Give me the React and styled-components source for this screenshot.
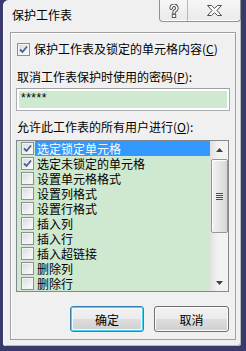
import React from 'react'
import styled, { createGlobalStyle, css } from 'styled-components'

const GlobalStyle = createGlobalStyle`
  html, body {
    margin: 0;
    padding: 0;
    background: #3a396c;
  }
  body {
    font-family: "Noto Sans CJK SC", "Noto Sans", sans-serif;
    font-size: 12px;
    color: #000;
  }
`

const Frame = styled.div`
  box-sizing: border-box;
  width: 246px;
  height: 351px;
  padding: 0 5px 5px 3px;
  background: #3a396c;
`

const Window = styled.div`
  display: flex;
  flex-direction: column;
  height: 346px;
  background: #f0f0f0;
  border-radius: 6px 6px 3px 3px;
  box-shadow: inset 1px 0 0 #fafafa, inset -1px -1px 0 #b9b9b9;
`

const TitleBar = styled.div`
  display: flex;
  justify-content: space-between;
  align-items: flex-start;
  height: 32px;
`

const Title = styled.div`
  padding: 6px 0 0 9px;
  line-height: 18px;
  font-size: 12px;
  color: #000;
`

const CaptionGroup = styled.div`
  display: flex;
  height: 21px;
  border: 1px solid #8e9094;
  border-top: none;
  border-radius: 0 0 4px 4px;
  background: linear-gradient(#f6f6f6, #eaeaea);
  box-shadow: inset 0 -1px 0 #fff;
`

const CaptionButton = styled.div`
  display: flex;
  align-items: center;
  justify-content: center;
  width: ${p => p.w}px;
  & + & {
    border-left: 1px solid #b8b8b8;
  }
`

const Panel = styled.div`
  display: flex;
  flex-direction: column;
  margin: 0 5px 6px 7px;
  height: 308px;
  box-sizing: border-box;
  border: 1px solid #a0a0a0;
  box-shadow: inset 1px 1px 0 #fff;
`

const CheckRow = styled.label`
  display: flex;
  align-items: center;
  height: 16px;
  margin: 8px 0 0 6px;
  gap: 4px;
  line-height: 16px;
`

const Box = styled.span`
  box-sizing: border-box;
  display: inline-flex;
  align-items: center;
  justify-content: center;
  flex: none;
  width: 13px;
  height: 13px;
  border: 1px solid #8e8f8f;
  background: linear-gradient(135deg, #d6d8dc 0%, #eceef0 55%, #fcfcfc 100%);
  box-shadow: inset 0 0 0 1px #f4f4f4;
`

const Label = styled.div`
  margin: ${p => p.top}px 0 0 6px;
  height: 16px;
  line-height: 16px;
`

const Password = styled.div`
  box-sizing: border-box;
  margin: 3px 0 0 5px;
  width: 214px;
  height: 23px;
  border: 1px solid #abadb3;
  border-top-color: #a0a0a0;
  padding: 2px;
  background: #fff;
`

const PasswordFill = styled.div`
  height: 100%;
  background: #cfe8d0;
  padding-left: 2px;
  line-height: 15px;
  font-family: "Liberation Sans", sans-serif;
  font-size: 12px;
  letter-spacing: 0.5px;
`

const List = styled.div`
  box-sizing: border-box;
  display: flex;
  margin: 5px 0 0 5px;
  width: 213px;
  height: 152px;
  border: 1px solid #828790;
  background: #cfe8d0;
`

const Items = styled.div`
  flex: 1;
  display: flex;
  flex-direction: column;
`

const Item = styled.div`
  display: flex;
  align-items: center;
  height: 15px;
  padding-left: 4px;
  gap: 1px;
`

const ItemText = styled.span`
  flex: 1;
  height: 15px;
  line-height: 15px;
  padding-left: 2px;
  overflow: hidden;
  white-space: nowrap;
  ${p =>
    p.selected &&
    css`
      background: #3399ff;
      color: #fff;
    `}
`

const ScrollBar = styled.div`
  display: flex;
  flex-direction: column;
  width: 17px;
  background: linear-gradient(90deg, #e3e3e3, #f2f2f2 40%, #f2f2f2);
  border-left: 1px solid #e0e0e0;
`

const Arrow = styled.div`
  display: flex;
  align-items: center;
  justify-content: center;
  height: 17px;
`

const Thumb = styled.div`
  box-sizing: border-box;
  display: flex;
  align-items: center;
  justify-content: center;
  margin: 1px 0 0 0;
  height: 74px;
  border: 1px solid #959595;
  border-radius: 2px;
  background: linear-gradient(90deg, #f2f2f2, #e6e6e6 50%, #d6d6d6);
  box-shadow: inset 1px 1px 0 #fff;
`

const Grip = styled.div`
  width: 7px;
  height: 7px;
  background: repeating-linear-gradient(
    #4e4e4e 0,
    #4e4e4e 1px,
    #e8e8e8 1px,
    #e8e8e8 2px
  );
`

const Spacer = styled.div`
  flex: 1;
`

const ButtonRow = styled.div`
  display: flex;
  justify-content: flex-end;
  gap: 10px;
  margin: 14px 6px 0 0;
`

const Button = styled.div`
  box-sizing: border-box;
  display: flex;
  align-items: center;
  justify-content: center;
  width: ${p => p.w}px;
  height: 26px;
  border: 1px solid #707070;
  border-radius: 3px;
  background: linear-gradient(#f2f2f2 0%, #ebebeb 50%, #dddddd 51%, #cfcfcf 100%);
  box-shadow: inset 0 0 0 1px #fbfbfb;
  ${p =>
    p.primary &&
    css`
      border-color: #3c7fb1;
      box-shadow: inset 0 0 0 1px #48d0f5, inset 0 0 0 2px #f4fbfe;
    `}
`

const CheckMark = () => (
  <svg width="9" height="9" viewBox="0 0 9 9">
    <path d="M1 4.5 L3.5 7 L8 1.5" fill="none" stroke="#4a5f97" strokeWidth="1.8" />
  </svg>
)

const Check = ({ checked }) => <Box>{checked && <CheckMark />}</Box>

const HelpIcon = () => (
  <svg width="10" height="14" viewBox="0 0 10 14">
    <g fill="none" strokeLinecap="round">
      <path d="M2.2 4.2 A2.8 2.8 0 1 1 6.2 6.6 C5 7.4 5 8 5 9" stroke="#555" strokeWidth="3.6" />
      <path d="M2.2 4.2 A2.8 2.8 0 1 1 6.2 6.6 C5 7.4 5 8 5 9" stroke="#fbfbfb" strokeWidth="1.6" />
    </g>
    <rect x="3.3" y="10.3" width="3.4" height="3.2" fill="#fbfbfb" stroke="#555" strokeWidth="1" />
  </svg>
)

const CloseIcon = () => (
  <svg width="15" height="11" viewBox="0 0 15 11">
    <polygon
      points="0.5,0.5 4.5,0.5 7.5,3.3 10.5,0.5 14.5,0.5 10,5.5 14.5,10.5 10.5,10.5 7.5,7.7 4.5,10.5 0.5,10.5 5,5.5"
      fill="#f8f8f8"
      stroke="#4f4f4f"
      strokeWidth="1"
      strokeLinejoin="round"
    />
  </svg>
)

const UpArrow = () => (
  <svg width="7" height="4" viewBox="0 0 7 4">
    <polygon points="3.5,0 7,4 0,4" fill="#3f3f3f" />
  </svg>
)

const DownArrow = () => (
  <svg width="7" height="4" viewBox="0 0 7 4">
    <polygon points="0,0 7,0 3.5,4" fill="#3f3f3f" />
  </svg>
)

const items = [
  { text: '选定锁定单元格', checked: true, selected: true },
  { text: '选定未锁定的单元格', checked: true },
  { text: '设置单元格格式' },
  { text: '设置列格式' },
  { text: '设置行格式' },
  { text: '插入列' },
  { text: '插入行' },
  { text: '插入超链接' },
  { text: '删除列' },
  { text: '删除行' },
]

const App = () => (
  <Frame>
    <GlobalStyle />
    <Window>
      <TitleBar>
        <Title>保护工作表</Title>
        <CaptionGroup>
          <CaptionButton w={27}>
            <HelpIcon />
          </CaptionButton>
          <CaptionButton w={52}>
            <CloseIcon />
          </CaptionButton>
        </CaptionGroup>
      </TitleBar>

      <Panel>
        <CheckRow>
          <Check checked />
          <span>
            保护工作表及锁定的单元格内容(<u>C</u>)
          </span>
        </CheckRow>

        <Label top={12}>
          取消工作表保护时使用的密码(<u>P</u>):
        </Label>
        <Password>
          <PasswordFill>*****</PasswordFill>
        </Password>

        <Label top={8}>
          允许此工作表的所有用户进行(<u>O</u>):
        </Label>
        <List>
          <Items>
            {items.map(item => (
              <Item key={item.text}>
                <Check checked={item.checked} />
                <ItemText selected={item.selected}>{item.text}</ItemText>
              </Item>
            ))}
          </Items>
          <ScrollBar>
            <Arrow>
              <UpArrow />
            </Arrow>
            <Thumb>
              <Grip />
            </Thumb>
            <Spacer />
            <Arrow>
              <DownArrow />
            </Arrow>
          </ScrollBar>
        </List>

        <ButtonRow>
          <Button primary w={74}>确定</Button>
          <Button w={75}>取消</Button>
        </ButtonRow>
      </Panel>
    </Window>
  </Frame>
)

export default App
